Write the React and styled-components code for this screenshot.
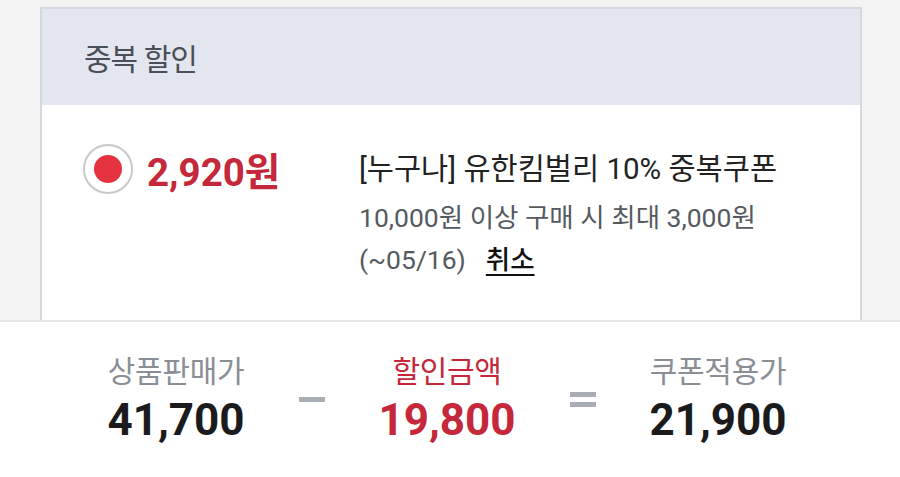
import React from 'react';
import styled, { createGlobalStyle } from 'styled-components';

const GlobalStyle = createGlobalStyle`
    html, body {
        margin: 0;
        padding: 0;
        background: #f3f3f4;
    }
    body {
        font-family: Roboto, "Noto Sans CJK KR", "Noto Sans", sans-serif;
        -webkit-font-smoothing: antialiased;
    }
`;

const Page = styled.div`
    display: flex;
    flex-direction: column;
    width: 900px;
    height: 477px;
    overflow: hidden;
`;

const CardArea = styled.div`
    height: 320px;
    overflow: hidden;
    padding: 7px 38px 0 40px;
    box-sizing: border-box;
`;

const Card = styled.section`
    border: 2px solid #d4d9e1;
    background: #fff;
    min-height: 400px;
`;

const CardHeader = styled.header`
    display: flex;
    align-items: center;
    height: 96px;
    padding-left: 42px;
    background: #e3e6ee;
    color: #4a4f57;
    font-size: 30px;
    letter-spacing: -1px;
`;

const CouponRow = styled.div`
    display: flex;
    align-items: flex-start;
    padding: 46px 0 0 41px;
`;

const Choice = styled.label`
    display: flex;
    align-items: center;
    gap: 14px;
    width: 276px;
    height: 36px;
    flex-shrink: 0;
`;

const Radio = styled.span`
    display: flex;
    align-items: center;
    justify-content: center;
    width: 46px;
    height: 46px;
    border-radius: 50%;
    border: 2px solid #c9c9c9;
    box-shadow: 0 0 1px rgba(0, 0, 0, 0.15);
    flex-shrink: 0;
    &::after {
        content: '';
        width: 28px;
        height: 28px;
        border-radius: 50%;
        background: ${p => (p.$checked ? '#e5323f' : 'transparent')};
    }
`;

const Amount = styled.span`
    color: #c4283a;
    font-size: 38.5px;
    font-weight: 700;
`;

const CouponInfo = styled.div`
    display: flex;
    flex-direction: column;
`;

const CouponTitle = styled.div`
    color: #222;
    font-size: 29.5px;
    line-height: 36px;
    margin-bottom: 10px;
`;

const CouponNote = styled.div`
    color: #555a60;
    font-size: 26.5px;
    line-height: 42px;
`;

const CancelLink = styled.a`
    margin-left: 20px;
    color: #111;
    text-decoration: underline;
    text-underline-offset: 5px;
    text-decoration-thickness: 2px;
    font-weight: 500;
    cursor: pointer;
`;

const Summary = styled.footer`
    flex: 1;
    display: flex;
    align-items: center;
    padding: 0 0 0 76px;
    background: #fff;
    border-top: 2px solid #e5e7eb;
`;

const Figure = styled.div`
    display: flex;
    flex-direction: column;
    align-items: center;
    width: 200px;
`;

const FigureLabel = styled.div`
    color: ${p => (p.$accent ? '#c4283a' : '#8a8e95')};
    font-size: 30px;
    line-height: 34px;
    letter-spacing: -0.3px;
    margin-bottom: 6px;
`;

const FigureValue = styled.div`
    color: ${p => (p.$accent ? '#c4283a' : '#1b1b1d')};
    font-size: 44px;
    line-height: 50px;
    font-weight: 700;
`;

const Operator = styled.div`
    display: flex;
    flex-direction: column;
    align-items: center;
    justify-content: center;
    gap: 5px;
    width: 71px;
    height: 50px;
    &::before, &::after {
        content: '';
        width: 26px;
        height: 5px;
        background: #a9adb5;
    }
    &::after {
        display: ${p => (p.$type === 'equals' ? 'block' : 'none')};
    }
`;

const figures = [
    { label: '상품판매가', value: '41,700' },
    { label: '할인금액', value: '19,800', accent: true },
    { label: '쿠폰적용가', value: '21,900' },
];

export default function App() {
    return (
        <Page>
            <GlobalStyle />
            <CardArea>
                <Card>
                    <CardHeader>중복 할인</CardHeader>
                    <CouponRow>
                        <Choice>
                            <Radio $checked />
                            <Amount>2,920원</Amount>
                        </Choice>
                        <CouponInfo>
                            <CouponTitle>[누구나] 유한킴벌리 10% 중복쿠폰</CouponTitle>
                            <CouponNote>10,000원 이상 구매 시 최대 3,000원</CouponNote>
                            <CouponNote>
                                (~05/16)
                                <CancelLink>취소</CancelLink>
                            </CouponNote>
                        </CouponInfo>
                    </CouponRow>
                </Card>
            </CardArea>
            <Summary>
                {figures.map((f, i) => (
                    <React.Fragment key={f.label}>
                        {i > 0 && <Operator $type={i === 1 ? 'minus' : 'equals'} />}
                        <Figure>
                            <FigureLabel $accent={f.accent}>{f.label}</FigureLabel>
                            <FigureValue $accent={f.accent}>{f.value}</FigureValue>
                        </Figure>
                    </React.Fragment>
                ))}
            </Summary>
        </Page>
    );
}
